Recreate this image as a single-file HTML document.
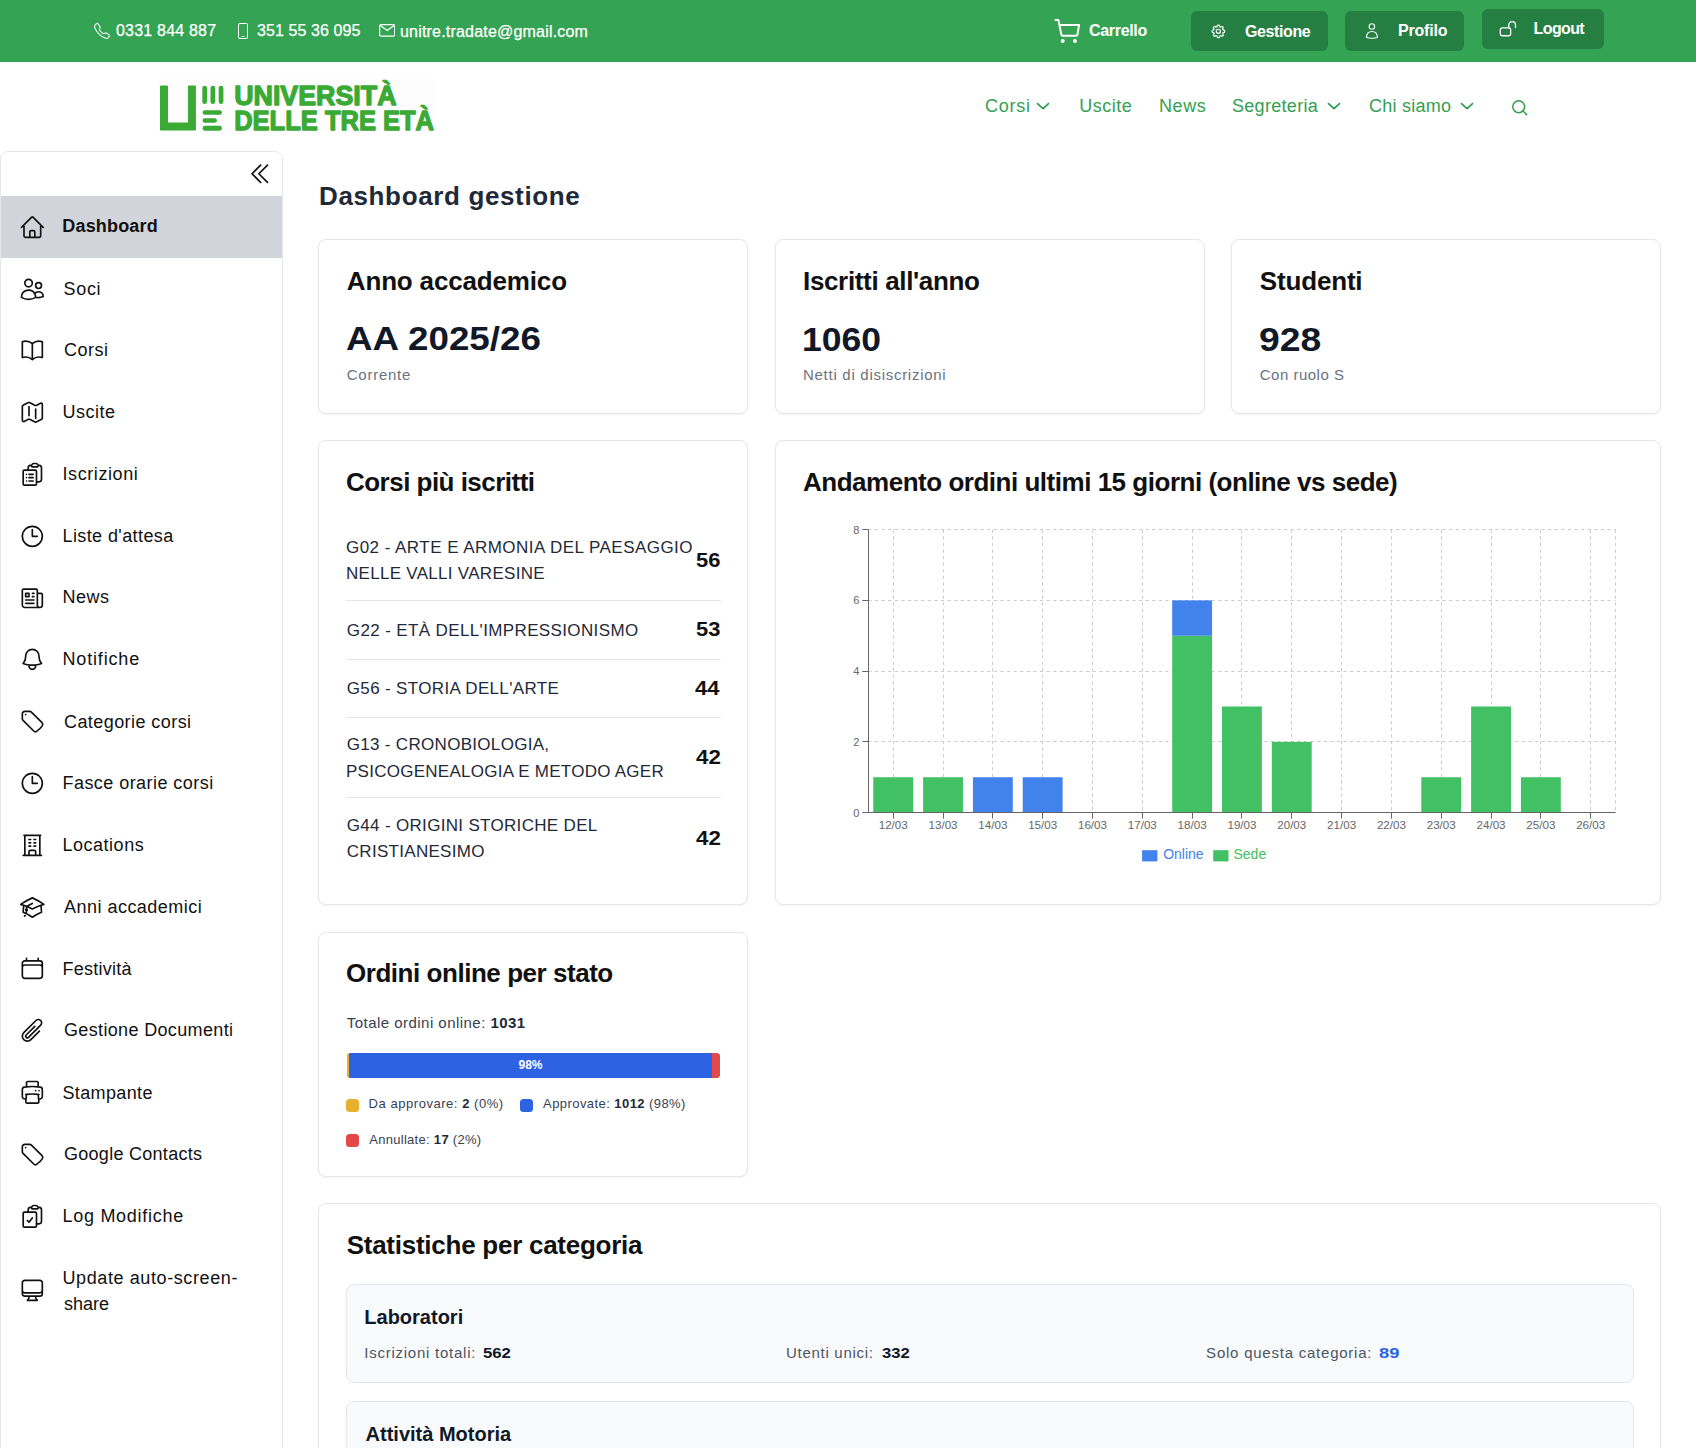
<!DOCTYPE html>
<html lang="it">
<head>
<meta charset="utf-8">
<title>Dashboard gestione</title>
<style>
html,body{margin:0;padding:0;}
body{width:1696px;height:1448px;overflow:hidden;position:relative;background:#fff;font-family:"Liberation Sans",sans-serif;color:#111;}
.abs{position:absolute;}
.t{position:absolute;white-space:nowrap;line-height:1;}
/* top bar */
#topbar{position:absolute;left:0;top:0;width:1696px;height:62px;background:#34a353;color:#fff;}
#topbar .t{font-size:16px;color:#fff;-webkit-text-stroke:0.25px #fff;}
#tb-cart,#tb-gest,#tb-prof,#tb-logout{-webkit-text-stroke:0 !important;}
.btn{position:absolute;background:#267f42;border-radius:6px;}
/* header */
.nav{position:absolute;font-size:18px;color:#34a050;white-space:nowrap;line-height:1;}
/* sidebar */
#sidebar{position:absolute;left:0;top:151px;width:281px;height:1320px;border:1px solid #e5e7eb;border-radius:8px;background:#fff;box-sizing:content-box;}
.si{position:absolute;left:0;width:281px;}
.si .lbl{position:absolute;left:63px;font-size:18px;line-height:25.5px;color:#111;white-space:nowrap;}
.si svg{position:absolute;left:18.2px;width:26.67px;height:26.67px;fill:none;stroke:#111;stroke-width:1.5;stroke-linecap:round;stroke-linejoin:round;}
/* cards */
.card{position:absolute;border:1px solid #e5e7eb;border-radius:8px;background:#fff;box-shadow:0 1px 2px rgba(0,0,0,0.05);box-sizing:border-box;}
#tb-phone{letter-spacing:0.2px;margin-left:0.0px;margin-top:-1.1px;}
#tb-mobile{letter-spacing:0.1px;margin-left:0.0px;margin-top:-1.1px;}
#tb-mail{letter-spacing:0.196px;margin-left:0.0px;margin-top:0.0px;}
#tb-cart{letter-spacing:-0.314px;margin-left:0.0px;margin-top:-1.2px;}
#tb-gest{letter-spacing:-0.386px;margin-left:0.0px;margin-top:0.0px;}
#tb-prof{letter-spacing:-0.2px;margin-left:0.0px;margin-top:-0.8px;}
#tb-logout{letter-spacing:-0.64px;margin-left:-1.4px;margin-top:-0.8px;}
#nav-corsi{letter-spacing:0.725px;margin-left:0.0px;margin-top:-1.3px;}
#nav-uscite{letter-spacing:0.5px;margin-left:-0.7px;margin-top:-1.3px;}
#nav-news{letter-spacing:0.567px;margin-left:0.0px;margin-top:-1.3px;}
#nav-segr{letter-spacing:0.322px;margin-left:-1.1px;margin-top:-1.0px;}
#nav-chi{letter-spacing:0.262px;margin-left:-1.1px;margin-top:-1.3px;}
#h-title{letter-spacing:0.635px;margin-left:0.0px;margin-top:0.0px;}
#c0-t{letter-spacing:-0.164px;margin-left:0.8px;margin-top:0.0px;}
#c0-n{letter-spacing:0.0px;margin-left:0.0px;margin-top:-0.8px;transform:scaleX(1.1145);transform-origin:0 0;}
#c0-s{letter-spacing:0.743px;margin-left:0.8px;margin-top:0.0px;}
#c1-t{letter-spacing:-0.344px;margin-left:0.0px;margin-top:0.0px;}
#c1-n{letter-spacing:0.0px;margin-left:-1.5px;margin-top:0.0px;transform:scaleX(1.0761);transform-origin:0 0;}
#c1-s{letter-spacing:0.719px;margin-left:0.0px;margin-top:0.0px;}
#c2-t{letter-spacing:-0.171px;margin-left:0.8px;margin-top:0.0px;}
#c2-n{letter-spacing:0.0px;margin-left:0.0px;margin-top:0.0px;transform:scaleX(1.1302);transform-origin:0 0;}
#c2-s{letter-spacing:0.49px;margin-left:0.8px;margin-top:0.0px;}
#corsi-t{letter-spacing:-0.524px;margin-left:0.0px;margin-top:0.0px;}
#r0-l1{letter-spacing:0.289px;margin-left:0.0px;margin-top:0.6px;}
#r1-l0{letter-spacing:0.371px;margin-left:0.8px;margin-top:0.0px;}
#r2-l0{letter-spacing:0.343px;margin-left:0.8px;margin-top:0.8px;}
#r3-l0{letter-spacing:0.305px;margin-left:0.8px;margin-top:0.0px;}
#r3-l1{letter-spacing:0.257px;margin-left:0.0px;margin-top:1.2px;}
#r4-l0{letter-spacing:0.32px;margin-left:0.8px;margin-top:0.0px;}
#r4-l1{letter-spacing:0.292px;margin-left:0.8px;margin-top:0.0px;}
#chart-t{letter-spacing:-0.482px;margin-left:0.0px;margin-top:0.0px;}
#ord-t{letter-spacing:-0.459px;margin-left:0.0px;margin-top:0.0px;}
#ord-tot{letter-spacing:0.464px;margin-left:0.8px;margin-top:0.0px;}
#ord-98{letter-spacing:0.0px;margin-left:0.0px;margin-top:0.0px;}
#leg1{letter-spacing:0.542px;margin-left:0.0px;margin-top:-0.8px;}
#leg2{letter-spacing:0.43px;margin-left:0.0px;margin-top:-0.8px;}
#leg3{letter-spacing:0.294px;margin-left:0.6px;margin-top:-0.9px;}
#stat-t{letter-spacing:-0.258px;margin-left:0.7px;margin-top:0.0px;}
#lab-t{letter-spacing:0.0px;margin-left:-0.7px;margin-top:0.0px;}
#lab-a{letter-spacing:0.747px;margin-left:-0.7px;margin-top:0.0px;}
#lab-an{letter-spacing:0.0px;margin-left:0.0px;margin-top:0.0px;transform:scaleX(1.116);transform-origin:0 0;}
#lab-c{letter-spacing:0.767px;margin-left:-0.9px;margin-top:0.0px;}
#lab-cn{letter-spacing:0.0px;margin-left:-1.1px;margin-top:0.0px;transform:scaleX(1.2272);transform-origin:0 0;}
#s0{letter-spacing:0.162px;margin-left:-1.7px;margin-top:0.0px;}
#s1{letter-spacing:0.733px;margin-left:-0.6px;margin-top:0.8px;}
#s2{letter-spacing:0.475px;margin-left:0.0px;margin-top:0.0px;}
#s3{letter-spacing:0.52px;margin-left:-1.5px;margin-top:0.0px;}
#s4{letter-spacing:0.578px;margin-left:-1.5px;margin-top:0.0px;}
#s5{letter-spacing:0.4px;margin-left:-1.5px;margin-top:0.7px;}
#s6{letter-spacing:0.467px;margin-left:-1.5px;margin-top:0.0px;}
#s7{letter-spacing:0.826px;margin-left:-1.5px;margin-top:0.0px;}
#s8{letter-spacing:0.429px;margin-left:0.0px;margin-top:1.2px;}
#s9{letter-spacing:0.447px;margin-left:-1.5px;margin-top:0.0px;}
#s10{letter-spacing:0.512px;margin-left:-1.5px;margin-top:0.9px;}
#s11{letter-spacing:0.479px;margin-left:0.0px;margin-top:0.7px;}
#s12{letter-spacing:0.262px;margin-left:-1.5px;margin-top:0.6px;}
#s13{letter-spacing:0.347px;margin-left:0.0px;margin-top:0.0px;}
#s14{letter-spacing:0.363px;margin-left:-1.5px;margin-top:1.4px;}
#s15{letter-spacing:0.279px;margin-left:0.0px;margin-top:0.6px;}
#s16{letter-spacing:0.717px;margin-left:-1.5px;margin-top:1.2px;}
#r0-l0{letter-spacing:0.461px;margin-left:0.0px;margin-top:0.8px;}
#r0-n{letter-spacing:0.0px;margin-left:0.0px;margin-top:0.0px;transform:scaleX(1.0955);transform-origin:0 0;}
#r1-n{letter-spacing:0.0px;margin-left:0.0px;margin-top:0.0px;transform:scaleX(1.0955);transform-origin:0 0;}
#r2-n{letter-spacing:0.0px;margin-left:-0.7px;margin-top:0.0px;transform:scaleX(1.1);transform-origin:0 0;}
#r3-n{letter-spacing:0.0px;margin-left:0.0px;margin-top:0.0px;transform:scaleX(1.1182);transform-origin:0 0;}
#r4-n{letter-spacing:0.0px;margin-left:0.0px;margin-top:0.0px;transform:scaleX(1.1182);transform-origin:0 0;}
#lab-b{letter-spacing:0.717px;margin-left:0.0px;margin-top:0.0px;}
#lab-bn{letter-spacing:0.0px;margin-left:0.0px;margin-top:0.0px;transform:scaleX(1.108);transform-origin:0 0;}
#mot-t{letter-spacing:0.0px;margin-left:0.6px;margin-top:0.0px;}
#s17a{letter-spacing:0.6px;margin-left:-1.5px;margin-top:3.0px;}
#s17b{letter-spacing:0.0px;margin-left:0.0px;margin-top:-2.0px;}
</style>
</head>
<body>

<!-- TOP BAR -->
<div id="topbar">
  <svg class="abs" style="left:94px;top:23px;width:16px;height:16px" viewBox="0 0 16 16" fill="#fff"><path d="M3.654 1.328a.678.678 0 0 0-1.015-.063L1.605 2.3c-.483.484-.661 1.169-.45 1.77a17.6 17.6 0 0 0 4.168 6.608 17.6 17.6 0 0 0 6.608 4.168c.601.211 1.286.033 1.77-.45l1.034-1.034a.678.678 0 0 0-.063-1.015l-2.307-1.794a.68.68 0 0 0-.58-.122l-2.19.547a1.75 1.75 0 0 1-1.657-.459L5.482 8.062a1.75 1.75 0 0 1-.46-1.657l.548-2.19a.68.68 0 0 0-.122-.58zM1.884.511a1.745 1.745 0 0 1 2.612.163L6.29 2.98c.329.423.445.974.315 1.494l-.547 2.19a.68.68 0 0 0 .178.643l2.457 2.457a.68.68 0 0 0 .644.178l2.189-.547a1.75 1.75 0 0 1 1.494.315l2.306 1.794c.829.645.905 1.870.163 2.611l-1.034 1.034c-.74.74-1.846 1.065-2.877.702a18.6 18.6 0 0 1-7.01-4.42 18.6 18.6 0 0 1-4.42-7.009c-.362-1.030-.037-2.137.703-2.877z"/></svg>
  <span class="t" id="tb-phone" style="left:116px;top:24px;">0331 844 887</span>
  <svg class="abs" style="left:235px;top:23px;width:16px;height:16px" viewBox="0 0 16 16" fill="#fff"><path d="M11 1a1 1 0 0 1 1 1v12a1 1 0 0 1-1 1H5a1 1 0 0 1-1-1V2a1 1 0 0 1 1-1zM5 0a2 2 0 0 0-2 2v12a2 2 0 0 0 2 2h6a2 2 0 0 0 2-2V2a2 2 0 0 0-2-2z"/><path d="M6.5 13h3v.8h-3z"/></svg>
  <span class="t" id="tb-mobile" style="left:257px;top:24px;">351 55 36 095</span>
  <svg class="abs" style="left:378.7px;top:24.4px;width:16.4px;height:12.8px" viewBox="0 0 16.4 12.8" fill="none" stroke="#fff" stroke-width="1.25" stroke-linejoin="round" stroke-linecap="round"><rect x="0.65" y="0.65" width="15.1" height="11.5" rx="1.5"/><path d="M1.4 1.6l6.8 5 6.8-5"/></svg>
  <span class="t" id="tb-mail" style="left:400px;top:24px;">unitre.tradate@gmail.com</span>

  <svg class="abs" style="left:1054px;top:18px;width:27px;height:27px" viewBox="0 0 27 27" fill="none" stroke="#fff" stroke-width="2" stroke-linecap="round" stroke-linejoin="round"><path d="M1.4 1.9h3l2.9 14.6c.15.8.6 1.3 1.4 1.3h13.3c.8 0 1.3-.5 1.45-1.3l1.6-9.4H5.5"/><circle cx="8.7" cy="23" r="2" fill="#fff" stroke="none"/><circle cx="20.9" cy="23" r="2" fill="#fff" stroke="none"/></svg>
  <span class="t" id="tb-cart" style="left:1089px;top:24px;font-weight:bold;">Carrello</span>

  <div class="btn" style="left:1191px;top:11px;width:137px;height:40px;"></div>
  <svg class="abs" style="left:1209.9px;top:22.9px;width:16.7px;height:16.7px" viewBox="0 0 24 24" fill="none" stroke="#fff" stroke-width="1.7" stroke-linecap="round" stroke-linejoin="round"><path d="M10.343 3.94c.09-.542.56-.94 1.11-.94h1.093c.55 0 1.02.398 1.11.94l.149.894c.07.424.384.764.78.93.398.164.855.142 1.205-.108l.737-.527a1.125 1.125 0 0 1 1.45.12l.773.774c.39.389.44 1.002.12 1.45l-.527.737c-.25.35-.272.806-.107 1.204.165.397.505.71.93.78l.893.15c.543.09.94.559.94 1.109v1.094c0 .55-.397 1.02-.94 1.11l-.894.149c-.424.07-.764.383-.929.78-.165.398-.143.854.107 1.204l.527.738c.32.447.269 1.06-.12 1.45l-.774.773a1.125 1.125 0 0 1-1.449.12l-.738-.527c-.35-.25-.806-.272-1.203-.107-.398.165-.71.505-.781.929l-.149.894c-.09.542-.56.94-1.11.94h-1.094c-.55 0-1.019-.398-1.11-.94l-.148-.894c-.071-.424-.384-.764-.781-.93-.398-.164-.854-.142-1.204.108l-.738.527c-.447.32-1.06.269-1.45-.12l-.773-.774a1.125 1.125 0 0 1-.12-1.45l.527-.737c.25-.35.272-.806.108-1.204-.165-.397-.506-.71-.93-.78l-.894-.15c-.542-.09-.94-.56-.94-1.109v-1.094c0-.55.398-1.02.94-1.11l.894-.149c.424-.07.765-.383.93-.78.165-.398.143-.854-.108-1.204l-.526-.738a1.125 1.125 0 0 1 .12-1.45l.773-.773a1.125 1.125 0 0 1 1.45-.12l.737.527c.35.25.807.272 1.204.107.397-.165.71-.505.78-.929l.15-.894Z"/><path d="M15 12a3 3 0 1 1-6 0 3 3 0 0 1 6 0Z"/></svg>
  <span class="t" id="tb-gest" style="left:1245px;top:24px;font-weight:bold;">Gestione</span>

  <div class="btn" style="left:1345px;top:11px;width:119px;height:40px;"></div>
  <svg class="abs" style="left:1363px;top:20px;width:18px;height:20px" viewBox="0 0 18 20" fill="none" stroke="#fff" stroke-width="1.15" stroke-linecap="round" stroke-linejoin="round"><circle cx="8.9" cy="6.45" r="2.75"/><path d="M3.4 17.3C3.7 13.6 5.9 11.5 8.95 11.5S14.2 13.6 14.5 17.3C12.1 18.5 5.8 18.5 3.4 17.3Z"/></svg>
  <span class="t" id="tb-prof" style="left:1398px;top:24px;font-weight:bold;">Profilo</span>

  <div class="btn" style="left:1482px;top:9px;width:122px;height:40px;"></div>
  <svg class="abs" style="left:1498px;top:20px;width:20px;height:18px" viewBox="0 0 20 18" fill="none" stroke="#fff" stroke-width="1.3" stroke-linecap="round" stroke-linejoin="round"><rect x="2.35" y="7.95" width="10.3" height="7.8" rx="1.7"/><path d="M10.8 7.9V5a3.35 3.35 0 0 1 6.7 0V7.6"/></svg>
  <span class="t" id="tb-logout" style="left:1535px;top:22px;font-weight:bold;">Logout</span>
</div>

<!-- HEADER -->
<div id="header">
  <!-- logo -->
  <svg class="abs" style="left:155px;top:78px;width:285px;height:58px" viewBox="0 0 285 58">
    <rect x="4" y="0.5" width="277" height="54" fill="#fdfdfd"/>
    <path d="M5.5 8h7v37h20.9v-37h7v44h-34.9z" fill="#3aaa35" stroke="#3aaa35" stroke-width="1" stroke-linejoin="round"/>
    <rect x="47.3" y="7.8" width="4.7" height="18.2" rx="2.3" fill="#3aaa35"/>
    <rect x="55.5" y="7.8" width="4.7" height="18.2" rx="2.3" fill="#3aaa35"/>
    <rect x="63.7" y="7.8" width="4.7" height="18.2" rx="2.3" fill="#3aaa35"/>
    <rect x="47.6" y="32.2" width="19.4" height="4.6" rx="2.3" fill="#3aaa35"/>
    <rect x="47.6" y="40.2" width="14.3" height="4.5" rx="2.2" fill="#3aaa35"/>
    <rect x="47.6" y="47.8" width="19.3" height="4.9" rx="2.4" fill="#3aaa35"/>
    <text x="79.2" y="26.9" font-family="Liberation Sans" font-weight="bold" font-size="27.8" fill="#3aaa35" stroke="#3aaa35" stroke-width="1.3" stroke-linejoin="round" textLength="162.3" lengthAdjust="spacingAndGlyphs">UNIVERSITÀ</text>
    <text x="79.2" y="51.9" font-family="Liberation Sans" font-weight="bold" font-size="27.5" fill="#3aaa35" stroke="#3aaa35" stroke-width="1.3" stroke-linejoin="round" textLength="199.8" lengthAdjust="spacingAndGlyphs">DELLE TRE ETÀ</text>
  </svg>
  <span class="nav" id="nav-corsi" style="left:985px;top:98px;">Corsi</span>
  <svg class="abs" style="left:1036px;top:101px;width:14px;height:9px" viewBox="0 0 14 9" fill="none" stroke="#2f9e4f" stroke-width="1.75" stroke-linecap="round" stroke-linejoin="round"><path d="M1.5 2.6l5.5 5 5.5-5"/></svg>
  <span class="nav" id="nav-uscite" style="left:1080px;top:98px;">Uscite</span>
  <span class="nav" id="nav-news" style="left:1159px;top:98px;">News</span>
  <span class="nav" id="nav-segr" style="left:1233px;top:98px;">Segreteria</span>
  <svg class="abs" style="left:1327px;top:101px;width:14px;height:9px" viewBox="0 0 14 9" fill="none" stroke="#2f9e4f" stroke-width="1.75" stroke-linecap="round" stroke-linejoin="round"><path d="M1.5 2.6l5.5 5 5.5-5"/></svg>
  <span class="nav" id="nav-chi" style="left:1370px;top:98px;">Chi siamo</span>
  <svg class="abs" style="left:1460px;top:101px;width:14px;height:9px" viewBox="0 0 14 9" fill="none" stroke="#2f9e4f" stroke-width="1.75" stroke-linecap="round" stroke-linejoin="round"><path d="M1.5 2.6l5.5 5 5.5-5"/></svg>
  <svg class="abs" style="left:1510px;top:98px;width:19px;height:19px" viewBox="0 0 24 24" fill="none" stroke="#34a050" stroke-width="1.9" stroke-linecap="round" stroke-linejoin="round"><circle cx="11" cy="11" r="7.5"/><path d="M21 21l-5.2-5.2"/></svg>
</div>

<!-- SIDEBAR -->
<div id="sidebar">
<svg class="abs" style="left:244.6px;top:8.35px;width:27.5px;height:27.5px" viewBox="0 0 24 24" fill="none" stroke="#111" stroke-width="1.5" stroke-linecap="round" stroke-linejoin="round"><path d="m18.75 4.5-7.5 7.5 7.5 7.5m-6-15L5.25 12l7.5 7.5"/></svg>
<div class="si" style="top:44.20px;height:61.80px;background:#d1d5db;"><svg style="top:17.56px" viewBox="0 0 24 24"><path d="m2.25 12 8.954-8.955c.44-.439 1.152-.439 1.591 0L21.75 12M4.5 9.75v10.125c0 .621.504 1.125 1.125 1.125H9.75v-4.875c0-.621.504-1.125 1.125-1.125h2.25c.621 0 1.125.504 1.125 1.125V21h4.125c.621 0 1.125-.504 1.125-1.125V9.75M8.25 21h8.25"/></svg><span class="lbl" id="s0" style="top:18.15px;font-weight:bold;">Dashboard</span></div>
<div class="si" style="top:106.00px;height:61.80px;"><svg style="top:17.56px" viewBox="0 0 24 24"><path d="M15 19.128a9.38 9.38 0 0 0 2.625.372 9.337 9.337 0 0 0 4.121-.952 4.125 4.125 0 0 0-7.533-2.493M15 19.128v-.003c0-1.113-.285-2.16-.786-3.07M15 19.128v.106A12.318 12.318 0 0 1 8.624 21c-2.331 0-4.512-.645-6.374-1.766l-.001-.109a6.375 6.375 0 0 1 11.964-3.07M12 6.375a3.375 3.375 0 1 1-6.75 0 3.375 3.375 0 0 1 6.75 0Zm8.25 2.25a2.625 2.625 0 1 1-5.25 0 2.625 2.625 0 0 1 5.25 0Z"/></svg><span class="lbl" id="s1" style="top:18.15px;">Soci</span></div>
<div class="si" style="top:167.80px;height:61.80px;"><svg style="top:17.56px" viewBox="0 0 24 24"><path d="M12 6.042A8.967 8.967 0 0 0 6 3.75c-1.052 0-2.062.18-3 .512v14.25A8.987 8.987 0 0 1 6 18c2.305 0 4.408.867 6 2.292m0-14.25a8.966 8.966 0 0 1 6-2.292c1.052 0 2.062.18 3 .512v14.25A8.987 8.987 0 0 0 18 18a8.967 8.967 0 0 0-6 2.292m0-14.25v14.25"/></svg><span class="lbl" id="s2" style="top:18.15px;">Corsi</span></div>
<div class="si" style="top:229.60px;height:61.80px;"><svg style="top:17.56px" viewBox="0 0 24 24"><path d="M9 6.75V15m6-6v8.25m.503 3.498 4.875-2.437c.381-.19.622-.58.622-1.006V4.82c0-.836-.88-1.38-1.628-1.006l-3.869 1.934c-.317.159-.69.159-1.006 0L9.503 3.252a1.125 1.125 0 0 0-1.006 0L3.622 5.689C3.24 5.88 3 6.27 3 6.695V19.18c0 .836.88 1.38 1.628 1.006l3.869-1.934c.317-.159.69-.159 1.006 0l4.994 2.497c.317.158.69.158 1.006 0Z"/></svg><span class="lbl" id="s3" style="top:18.15px;">Uscite</span></div>
<div class="si" style="top:291.40px;height:61.80px;"><svg style="top:17.56px" viewBox="0 0 24 24"><path d="M9 12h3.75M9 15h3.75M9 18h3.75m3 .75H18a2.25 2.25 0 0 0 2.25-2.25V6.108c0-1.135-.845-2.098-1.976-2.192a48.424 48.424 0 0 0-1.123-.08m-5.801 0c-.065.21-.1.433-.1.664 0 .414.336.75.75.75h4.5a.75.75 0 0 0 .75-.75 2.25 2.25 0 0 0-.1-.664m-5.8 0A2.251 2.251 0 0 1 13.5 2.25H15c1.012 0 1.867.668 2.15 1.586m-5.8 0c-.376.023-.75.05-1.124.08C9.095 4.01 8.25 4.973 8.25 6.108V8.25m0 0H4.875c-.621 0-1.125.504-1.125 1.125v11.25c0 .621.504 1.125 1.125 1.125h9.75c.621 0 1.125-.504 1.125-1.125V9.375c0-.621-.504-1.125-1.125-1.125H8.25ZM6.75 12h.008v.008H6.75V12Zm0 3h.008v.008H6.75V15Zm0 3h.008v.008H6.75V18Z"/></svg><span class="lbl" id="s4" style="top:18.15px;">Iscrizioni</span></div>
<div class="si" style="top:353.20px;height:61.80px;"><svg style="top:17.56px" viewBox="0 0 24 24"><path d="M12 6v6h4.5m4.5 0a9 9 0 1 1-18 0 9 9 0 0 1 18 0Z"/></svg><span class="lbl" id="s5" style="top:18.15px;">Liste d'attesa</span></div>
<div class="si" style="top:415.00px;height:61.80px;"><svg style="top:17.56px" viewBox="0 0 24 24"><path d="M12 7.5h1.5m-1.5 3h1.5m-7.5 3h7.5m-7.5 3h7.5m3-9h3.375c.621 0 1.125.504 1.125 1.125V18a2.25 2.25 0 0 1-2.25 2.25M16.5 7.5V18a2.25 2.25 0 0 0 2.25 2.25M16.5 7.5V4.875c0-.621-.504-1.125-1.125-1.125H4.125C3.504 3.750 3 4.254 3 4.875V18a2.25 2.25 0 0 0 2.25 2.25h13.5M6 7.5h3v3H6v-3Z"/></svg><span class="lbl" id="s6" style="top:18.15px;">News</span></div>
<div class="si" style="top:476.80px;height:61.80px;"><svg style="top:17.56px" viewBox="0 0 24 24"><path d="M14.857 17.082a23.848 23.848 0 0 0 5.454-1.31A8.967 8.967 0 0 1 18 9.75V9A6 6 0 0 0 6 9v.75a8.967 8.967 0 0 1-2.312 6.022c1.733.64 3.56 1.085 5.455 1.31m5.714 0a24.255 24.255 0 0 1-5.714 0m5.714 0a3 3 0 1 1-5.714 0"/></svg><span class="lbl" id="s7" style="top:18.15px;">Notifiche</span></div>
<div class="si" style="top:538.60px;height:61.80px;"><svg style="top:17.56px" viewBox="0 0 24 24"><path d="M9.568 3H5.25A2.25 2.25 0 0 0 3 5.25v4.318c0 .597.237 1.17.659 1.591l9.581 9.581c.699.699 1.78.872 2.607.33a18.095 18.095 0 0 0 5.223-5.223c.542-.827.369-1.908-.33-2.607L11.16 3.66A2.25 2.25 0 0 0 9.568 3Z"/><path d="M6 6h.008v.008H6V6Z"/></svg><span class="lbl" id="s8" style="top:18.15px;">Categorie corsi</span></div>
<div class="si" style="top:600.40px;height:61.80px;"><svg style="top:17.56px" viewBox="0 0 24 24"><path d="M12 6v6h4.5m4.5 0a9 9 0 1 1-18 0 9 9 0 0 1 18 0Z"/></svg><span class="lbl" id="s9" style="top:18.15px;">Fasce orarie corsi</span></div>
<div class="si" style="top:662.20px;height:61.80px;"><svg style="top:17.56px" viewBox="0 0 24 24"><path d="M3.75 21h16.5M4.5 3h15M5.25 3v18m13.5-18v18M9 6.75h1.5m-1.5 3h1.5m-1.5 3h1.5m3-6H15m-1.5 3H15m-1.5 3H15M9 21v-3.375c0-.621.504-1.125 1.125-1.125h3.75c.621 0 1.125.504 1.125 1.125V21"/></svg><span class="lbl" id="s10" style="top:18.15px;">Locations</span></div>
<div class="si" style="top:724.00px;height:61.80px;"><svg style="top:17.56px" viewBox="0 0 24 24"><path d="M4.26 10.147a60.438 60.438 0 0 0-.491 6.347A48.62 48.62 0 0 1 12 20.904a48.62 48.62 0 0 1 8.232-4.41 60.46 60.46 0 0 0-.491-6.347m-15.482 0a50.636 50.636 0 0 0-2.658-.813A59.906 59.906 0 0 1 12 3.493a59.903 59.903 0 0 1 10.399 5.84c-.896.248-1.783.52-2.658.814m-15.482 0A50.717 50.717 0 0 1 12 13.489a50.702 50.702 0 0 1 7.74-3.342M6.75 15a.75.75 0 1 0 0-1.5.75.75 0 0 0 0 1.5Zm0 0v-3.675A55.378 55.378 0 0 1 12 8.443m-7.007 11.55A5.981 5.981 0 0 0 6.75 15.75v-1.5"/></svg><span class="lbl" id="s11" style="top:18.15px;">Anni accademici</span></div>
<div class="si" style="top:785.80px;height:61.80px;"><svg style="top:17.56px" viewBox="0 0 24 24"><path d="M6.75 3v2.25M17.25 3v2.25M3 18.75V7.5a2.25 2.25 0 0 1 2.25-2.25h13.5A2.25 2.25 0 0 1 21 7.5v11.25m-18 0A2.25 2.25 0 0 0 5.25 21h13.5A2.25 2.25 0 0 0 21 18.75m-18 0v-7.5A2.25 2.25 0 0 1 5.25 9h13.5A2.25 2.25 0 0 1 21 11.25v7.5"/></svg><span class="lbl" id="s12" style="top:18.15px;">Festività</span></div>
<div class="si" style="top:847.60px;height:61.80px;"><svg style="top:17.56px" viewBox="0 0 24 24"><path d="m18.375 12.739-7.693 7.693a4.5 4.5 0 0 1-6.364-6.364l10.94-10.94A3 3 0 1 1 19.5 7.372L8.552 18.32m.009-.01-.01.01m5.699-9.941-7.81 7.81a1.5 1.5 0 0 0 2.112 2.13"/></svg><span class="lbl" id="s13" style="top:18.15px;">Gestione Documenti</span></div>
<div class="si" style="top:909.40px;height:61.80px;"><svg style="top:17.56px" viewBox="0 0 24 24"><path d="M6.72 13.829c-.24.03-.48.062-.72.096m.72-.096a42.415 42.415 0 0 1 10.56 0m-10.56 0L6.34 18m10.94-4.171c.24.03.48.062.72.096m-.72-.096L17.66 18m0 0 .229 2.523a1.125 1.125 0 0 1-1.12 1.227H7.231c-.662 0-1.18-.568-1.12-1.227L6.34 18m11.318 0h1.091A2.25 2.25 0 0 0 21 15.75V9.456c0-1.081-.768-2.015-1.837-2.175a48.055 48.055 0 0 0-1.913-.247M6.34 18H5.25A2.25 2.25 0 0 1 3 15.75V9.456c0-1.081.768-2.015 1.837-2.175a48.041 48.041 0 0 1 1.913-.247m10.5 0a48.536 48.536 0 0 0-10.5 0m10.5 0V3.375c0-.621-.504-1.125-1.125-1.125h-8.25c-.621 0-1.125.504-1.125 1.125v3.659M18 10.5h.008v.008H18V10.5Zm-3 0h.008v.008H15V10.5Z"/></svg><span class="lbl" id="s14" style="top:18.15px;">Stampante</span></div>
<div class="si" style="top:971.20px;height:61.80px;"><svg style="top:17.56px" viewBox="0 0 24 24"><path d="M9.568 3H5.25A2.25 2.25 0 0 0 3 5.25v4.318c0 .597.237 1.17.659 1.591l9.581 9.581c.699.699 1.78.872 2.607.33a18.095 18.095 0 0 0 5.223-5.223c.542-.827.369-1.908-.33-2.607L11.16 3.66A2.25 2.25 0 0 0 9.568 3Z"/><path d="M6 6h.008v.008H6V6Z"/></svg><span class="lbl" id="s15" style="top:18.15px;">Google Contacts</span></div>
<div class="si" style="top:1033.00px;height:61.80px;"><svg style="top:17.56px" viewBox="0 0 24 24"><path d="M11.35 3.836c-.065.21-.1.433-.1.664 0 .414.336.75.75.75h4.5a.75.75 0 0 0 .75-.75 2.25 2.25 0 0 0-.1-.664m-5.8 0A2.251 2.251 0 0 1 13.5 2.25H15c1.012 0 1.867.668 2.15 1.586m-5.8 0c-.376.023-.75.05-1.124.08C9.095 4.01 8.25 4.973 8.25 6.108V8.25m8.9-4.414c.376.023.75.05 1.124.08 1.131.094 1.976 1.057 1.976 2.192V16.5A2.25 2.25 0 0 1 18 18.75h-2.25m-7.5-10.5H4.875c-.621 0-1.125.504-1.125 1.125v11.25c0 .621.504 1.125 1.125 1.125h9.75c.621 0 1.125-.504 1.125-1.125V18.75m-7.5-10.5h6.375c.621 0 1.125.504 1.125 1.125v9.375m-8.25-3 1.5 1.5 3-3.75"/></svg><span class="lbl" id="s16" style="top:18.15px;">Log Modifiche</span></div>
<div class="si" style="top:1094.80px;height:87.30px;"><svg style="top:30.31px" viewBox="0 0 24 24"><path d="M9 17.25v1.007a3 3 0 0 1-.879 2.122L7.5 21h9l-.621-.621A3 3 0 0 1 15 18.257V17.25m6-12V15a2.25 2.25 0 0 1-2.25 2.25H5.25A2.25 2.25 0 0 1 3 15V5.25m18 0A2.25 2.25 0 0 0 18.75 3H5.25A2.25 2.25 0 0 0 3 5.25m18 0V12a2.25 2.25 0 0 1-2.25 2.25H5.25A2.25 2.25 0 0 1 3 12V5.25"/></svg><span class="lbl" id="s17" style="top:19.35px;"><span id="s17a">Update auto-screen-</span><br><span id="s17b">share</span></span></div>
</div>

<!-- MAIN -->
<span class="t" id="h-title" style="left:319px;top:182.69px;font-size:26px;font-weight:bold;color:#1f2937;">Dashboard gestione</span>
<div class="card" style="left:318px;top:239px;width:430px;height:175px;"></div>
<span class="t" id="c0-t" style="left:346px;top:268.09px;font-size:26px;font-weight:bold;color:#111;">Anno accademico</span>
<span class="t" id="c0-n" style="left:346px;top:323.27px;font-size:33px;font-weight:bold;color:#111827;">AA 2025/26</span>
<span class="t" id="c0-s" style="left:346px;top:367.30px;font-size:15px;color:#6b7280;">Corrente</span>
<div class="card" style="left:775px;top:239px;width:430px;height:175px;"></div>
<span class="t" id="c1-t" style="left:803px;top:268.09px;font-size:26px;font-weight:bold;color:#111;">Iscritti all'anno</span>
<span class="t" id="c1-n" style="left:803px;top:323.27px;font-size:33px;font-weight:bold;color:#111827;">1060</span>
<span class="t" id="c1-s" style="left:803px;top:367.30px;font-size:15px;color:#6b7280;">Netti di disiscrizioni</span>
<div class="card" style="left:1231px;top:239px;width:430px;height:175px;"></div>
<span class="t" id="c2-t" style="left:1259px;top:268.09px;font-size:26px;font-weight:bold;color:#111;">Studenti</span>
<span class="t" id="c2-n" style="left:1259px;top:323.27px;font-size:33px;font-weight:bold;color:#111827;">928</span>
<span class="t" id="c2-s" style="left:1259px;top:367.30px;font-size:15px;color:#6b7280;">Con ruolo S</span>
<div class="card" style="left:318px;top:440px;width:430px;height:465px;"></div>
<span class="t" id="corsi-t" style="left:346px;top:468.69px;font-size:26px;font-weight:bold;color:#111;">Corsi più iscritti</span>
<span class="t" id="r0-l0" style="left:346px;top:538.41px;font-size:17px;color:#1f2937;">G02 - ARTE E ARMONIA DEL PAESAGGIO</span>
<span class="t" id="r0-l1" style="left:346px;top:564.21px;font-size:17px;color:#1f2937;">NELLE VALLI VARESINE</span>
<span class="t" id="r0-n" style="left:696px;top:550.37px;font-size:20px;font-weight:bold;color:#111;">56</span>
<span class="t" id="r1-l0" style="left:346px;top:622.11px;font-size:17px;color:#1f2937;">G22 - ETÀ DELL'IMPRESSIONISMO</span>
<span class="t" id="r1-n" style="left:696px;top:619.27px;font-size:20px;font-weight:bold;color:#111;">53</span>
<span class="t" id="r2-l0" style="left:346px;top:679.41px;font-size:17px;color:#1f2937;">G56 - STORIA DELL'ARTE</span>
<span class="t" id="r2-n" style="left:696px;top:677.97px;font-size:20px;font-weight:bold;color:#111;">44</span>
<span class="t" id="r3-l0" style="left:346px;top:735.91px;font-size:17px;color:#1f2937;">G13 - CRONOBIOLOGIA,</span>
<span class="t" id="r3-l1" style="left:346px;top:761.71px;font-size:17px;color:#1f2937;">PSICOGENEALOGIA E METODO AGER</span>
<span class="t" id="r3-n" style="left:696px;top:747.37px;font-size:20px;font-weight:bold;color:#111;">42</span>
<span class="t" id="r4-l0" style="left:346px;top:817.01px;font-size:17px;color:#1f2937;">G44 - ORIGINI STORICHE DEL</span>
<span class="t" id="r4-l1" style="left:346px;top:842.81px;font-size:17px;color:#1f2937;">CRISTIANESIMO</span>
<span class="t" id="r4-n" style="left:696px;top:828.07px;font-size:20px;font-weight:bold;color:#111;">42</span>
<div class="abs" style="left:346px;top:600px;width:375px;height:1px;background:#e5e7eb;"></div>
<div class="abs" style="left:346px;top:659px;width:375px;height:1px;background:#e5e7eb;"></div>
<div class="abs" style="left:346px;top:717px;width:375px;height:1px;background:#e5e7eb;"></div>
<div class="abs" style="left:346px;top:797px;width:375px;height:1px;background:#e5e7eb;"></div>
<div class="card" style="left:775px;top:440px;width:886px;height:465px;"></div>
<span class="t" id="chart-t" style="left:803px;top:468.89px;font-size:26px;font-weight:bold;color:#111;">Andamento ordini ultimi 15 giorni (online vs sede)</span>
<div class="card" style="left:318px;top:932px;width:430px;height:245px;"></div>
<span class="t" id="ord-t" style="left:346px;top:960.29px;font-size:26px;font-weight:bold;color:#111;">Ordini online per stato</span>
<span class="t" id="ord-tot" style="left:346px;top:1014.90px;font-size:15px;color:#374151;">Totale ordini online: <b style="color:#1f2937">1031</b></span>
<div class="abs" style="left:347px;top:1053px;width:373px;height:24.7px;border-radius:4px;overflow:hidden;background:#2d62e3;"><div class="abs" style="left:0;top:0;width:1.8px;height:100%;background:#e6b12f;"></div><div class="abs" style="right:0;top:0;width:8.2px;height:100%;background:#e54848;"></div></div>
<span class="t" id="ord-98" style="left:518.5px;top:1059.24px;font-size:12px;font-weight:bold;color:#fff;">98%</span>
<div class="abs" style="left:346.2px;top:1099.2px;width:12.8px;height:12.8px;border-radius:3.5px;background:#e6b12f;"></div>
<span class="t" id="leg1" style="left:368.6px;top:1097.70px;font-size:13px;color:#374151;">Da approvare: <b style="color:#1f2937">2</b> (0%)</span>
<div class="abs" style="left:520.2px;top:1099.2px;width:12.8px;height:12.8px;border-radius:3.5px;background:#2d62e3;"></div>
<span class="t" id="leg2" style="left:543.1px;top:1097.70px;font-size:13px;color:#374151;">Approvate: <b style="color:#1f2937">1012</b> (98%)</span>
<div class="abs" style="left:346.2px;top:1134.3px;width:12.8px;height:12.8px;border-radius:3.5px;background:#e54848;"></div>
<span class="t" id="leg3" style="left:368.6px;top:1133.60px;font-size:13px;color:#374151;">Annullate: <b style="color:#1f2937">17</b> (2%)</span>
<div class="card" style="left:318px;top:1203px;width:1343px;height:400px;"></div>
<span class="t" id="stat-t" style="left:346px;top:1231.79px;font-size:26px;font-weight:bold;color:#111;">Statistiche per categoria</span>
<div class="abs" style="left:346px;top:1284px;width:1288px;height:99px;box-sizing:border-box;border:1px solid #e5e7eb;border-radius:8px;background:#f9fafb;"></div>
<span class="t" id="lab-t" style="left:365px;top:1307.07px;font-size:20px;font-weight:bold;color:#111827;">Laboratori</span>
<span class="t" id="lab-a" style="left:365px;top:1345.30px;font-size:15px;color:#4b5563;">Iscrizioni totali:</span>
<span class="t" id="lab-an" style="left:483px;top:1345.30px;font-size:15px;font-weight:bold;color:#111827;">562</span>
<span class="t" id="lab-b" style="left:786px;top:1345.30px;font-size:15px;color:#4b5563;">Utenti unici:</span>
<span class="t" id="lab-bn" style="left:882px;top:1345.30px;font-size:15px;font-weight:bold;color:#111827;">332</span>
<span class="t" id="lab-c" style="left:1207px;top:1345.30px;font-size:15px;color:#4b5563;">Solo questa categoria:</span>
<span class="t" id="lab-cn" style="left:1380px;top:1345.30px;font-size:15px;font-weight:bold;color:#2d62e3;">89</span>
<div class="abs" style="left:346px;top:1401px;width:1288px;height:99px;box-sizing:border-box;border:1px solid #e5e7eb;border-radius:8px;background:#f9fafb;"></div>
<span class="t" id="mot-t" style="left:365px;top:1424.07px;font-size:20px;font-weight:bold;color:#111827;">Attività Motoria</span>
<svg class="abs" style="left:0;top:0;width:1696px;height:1448px;pointer-events:none" viewBox="0 0 1696 1448">
<line x1="868.3" y1="529.50" x2="1615.6" y2="529.50" stroke="#ccc" stroke-dasharray="3.3 3.3"/>
<line x1="868.3" y1="600.50" x2="1615.6" y2="600.50" stroke="#ccc" stroke-dasharray="3.3 3.3"/>
<line x1="868.3" y1="671.50" x2="1615.6" y2="671.50" stroke="#ccc" stroke-dasharray="3.3 3.3"/>
<line x1="868.3" y1="741.50" x2="1615.6" y2="741.50" stroke="#ccc" stroke-dasharray="3.3 3.3"/>
<line x1="893.50" y1="529.6" x2="893.50" y2="812.6" stroke="#ccc" stroke-dasharray="3.3 3.3"/>
<line x1="943.50" y1="529.6" x2="943.50" y2="812.6" stroke="#ccc" stroke-dasharray="3.3 3.3"/>
<line x1="992.50" y1="529.6" x2="992.50" y2="812.6" stroke="#ccc" stroke-dasharray="3.3 3.3"/>
<line x1="1042.50" y1="529.6" x2="1042.50" y2="812.6" stroke="#ccc" stroke-dasharray="3.3 3.3"/>
<line x1="1092.50" y1="529.6" x2="1092.50" y2="812.6" stroke="#ccc" stroke-dasharray="3.3 3.3"/>
<line x1="1142.50" y1="529.6" x2="1142.50" y2="812.6" stroke="#ccc" stroke-dasharray="3.3 3.3"/>
<line x1="1192.50" y1="529.6" x2="1192.50" y2="812.6" stroke="#ccc" stroke-dasharray="3.3 3.3"/>
<line x1="1241.50" y1="529.6" x2="1241.50" y2="812.6" stroke="#ccc" stroke-dasharray="3.3 3.3"/>
<line x1="1291.50" y1="529.6" x2="1291.50" y2="812.6" stroke="#ccc" stroke-dasharray="3.3 3.3"/>
<line x1="1341.50" y1="529.6" x2="1341.50" y2="812.6" stroke="#ccc" stroke-dasharray="3.3 3.3"/>
<line x1="1391.50" y1="529.6" x2="1391.50" y2="812.6" stroke="#ccc" stroke-dasharray="3.3 3.3"/>
<line x1="1441.50" y1="529.6" x2="1441.50" y2="812.6" stroke="#ccc" stroke-dasharray="3.3 3.3"/>
<line x1="1491.50" y1="529.6" x2="1491.50" y2="812.6" stroke="#ccc" stroke-dasharray="3.3 3.3"/>
<line x1="1540.50" y1="529.6" x2="1540.50" y2="812.6" stroke="#ccc" stroke-dasharray="3.3 3.3"/>
<line x1="1590.50" y1="529.6" x2="1590.50" y2="812.6" stroke="#ccc" stroke-dasharray="3.3 3.3"/>
<line x1="1615.5" y1="529.6" x2="1615.5" y2="812.6" stroke="#ccc" stroke-dasharray="3.3 3.3"/>
<rect x="873.28" y="777.23" width="39.86" height="35.38" fill="#41c163"/>
<rect x="923.10" y="777.23" width="39.86" height="35.38" fill="#41c163"/>
<rect x="972.92" y="777.23" width="39.86" height="35.38" fill="#4282ec"/>
<rect x="1022.74" y="777.23" width="39.86" height="35.38" fill="#4282ec"/>
<rect x="1172.20" y="635.73" width="39.86" height="176.88" fill="#41c163"/>
<rect x="1172.20" y="600.35" width="39.86" height="35.38" fill="#4282ec"/>
<rect x="1222.02" y="706.48" width="39.86" height="106.12" fill="#41c163"/>
<rect x="1271.84" y="741.85" width="39.86" height="70.75" fill="#41c163"/>
<rect x="1421.30" y="777.23" width="39.86" height="35.38" fill="#41c163"/>
<rect x="1471.12" y="706.48" width="39.86" height="106.12" fill="#41c163"/>
<rect x="1520.94" y="777.23" width="39.86" height="35.38" fill="#41c163"/>
<line x1="868.5" y1="529.6" x2="868.5" y2="813.0" stroke="#666"/>
<line x1="868.3" y1="812.5" x2="1615.6" y2="812.5" stroke="#666"/>
<line x1="862.3" y1="812.50" x2="868.3" y2="812.50" stroke="#666"/>
<text x="859.3" y="816.50" text-anchor="end" font-family="Liberation Sans" font-size="11" fill="#666">0</text>
<line x1="862.3" y1="741.50" x2="868.3" y2="741.50" stroke="#666"/>
<text x="859.3" y="745.75" text-anchor="end" font-family="Liberation Sans" font-size="11" fill="#666">2</text>
<line x1="862.3" y1="671.50" x2="868.3" y2="671.50" stroke="#666"/>
<text x="859.3" y="675.00" text-anchor="end" font-family="Liberation Sans" font-size="11" fill="#666">4</text>
<line x1="862.3" y1="600.50" x2="868.3" y2="600.50" stroke="#666"/>
<text x="859.3" y="604.25" text-anchor="end" font-family="Liberation Sans" font-size="11" fill="#666">6</text>
<line x1="862.3" y1="529.50" x2="868.3" y2="529.50" stroke="#666"/>
<text x="859.3" y="533.50" text-anchor="end" font-family="Liberation Sans" font-size="11" fill="#666">8</text>
<line x1="893.50" y1="812.5" x2="893.50" y2="818.6" stroke="#666"/>
<text x="893.21" y="828.9" text-anchor="middle" font-family="Liberation Sans" font-size="11.6" fill="#666">12/03</text>
<line x1="943.50" y1="812.5" x2="943.50" y2="818.6" stroke="#666"/>
<text x="943.03" y="828.9" text-anchor="middle" font-family="Liberation Sans" font-size="11.6" fill="#666">13/03</text>
<line x1="992.50" y1="812.5" x2="992.50" y2="818.6" stroke="#666"/>
<text x="992.85" y="828.9" text-anchor="middle" font-family="Liberation Sans" font-size="11.6" fill="#666">14/03</text>
<line x1="1042.50" y1="812.5" x2="1042.50" y2="818.6" stroke="#666"/>
<text x="1042.67" y="828.9" text-anchor="middle" font-family="Liberation Sans" font-size="11.6" fill="#666">15/03</text>
<line x1="1092.50" y1="812.5" x2="1092.50" y2="818.6" stroke="#666"/>
<text x="1092.49" y="828.9" text-anchor="middle" font-family="Liberation Sans" font-size="11.6" fill="#666">16/03</text>
<line x1="1142.50" y1="812.5" x2="1142.50" y2="818.6" stroke="#666"/>
<text x="1142.31" y="828.9" text-anchor="middle" font-family="Liberation Sans" font-size="11.6" fill="#666">17/03</text>
<line x1="1192.50" y1="812.5" x2="1192.50" y2="818.6" stroke="#666"/>
<text x="1192.13" y="828.9" text-anchor="middle" font-family="Liberation Sans" font-size="11.6" fill="#666">18/03</text>
<line x1="1241.50" y1="812.5" x2="1241.50" y2="818.6" stroke="#666"/>
<text x="1241.95" y="828.9" text-anchor="middle" font-family="Liberation Sans" font-size="11.6" fill="#666">19/03</text>
<line x1="1291.50" y1="812.5" x2="1291.50" y2="818.6" stroke="#666"/>
<text x="1291.77" y="828.9" text-anchor="middle" font-family="Liberation Sans" font-size="11.6" fill="#666">20/03</text>
<line x1="1341.50" y1="812.5" x2="1341.50" y2="818.6" stroke="#666"/>
<text x="1341.59" y="828.9" text-anchor="middle" font-family="Liberation Sans" font-size="11.6" fill="#666">21/03</text>
<line x1="1391.50" y1="812.5" x2="1391.50" y2="818.6" stroke="#666"/>
<text x="1391.41" y="828.9" text-anchor="middle" font-family="Liberation Sans" font-size="11.6" fill="#666">22/03</text>
<line x1="1441.50" y1="812.5" x2="1441.50" y2="818.6" stroke="#666"/>
<text x="1441.23" y="828.9" text-anchor="middle" font-family="Liberation Sans" font-size="11.6" fill="#666">23/03</text>
<line x1="1491.50" y1="812.5" x2="1491.50" y2="818.6" stroke="#666"/>
<text x="1491.05" y="828.9" text-anchor="middle" font-family="Liberation Sans" font-size="11.6" fill="#666">24/03</text>
<line x1="1540.50" y1="812.5" x2="1540.50" y2="818.6" stroke="#666"/>
<text x="1540.87" y="828.9" text-anchor="middle" font-family="Liberation Sans" font-size="11.6" fill="#666">25/03</text>
<line x1="1590.50" y1="812.5" x2="1590.50" y2="818.6" stroke="#666"/>
<text x="1590.69" y="828.9" text-anchor="middle" font-family="Liberation Sans" font-size="11.6" fill="#666">26/03</text>
<rect x="1142.1" y="850.2" width="15.3" height="11.2" fill="#4282ec"/>
<text x="1163.2" y="859.4" font-family="Liberation Sans" font-size="14" fill="#4282ec">Online</text>
<rect x="1213.2" y="850.2" width="15.3" height="11.2" fill="#41c163"/>
<text x="1233.5" y="859.4" font-family="Liberation Sans" font-size="14" fill="#41c163">Sede</text>
</svg>

</body>
</html>
